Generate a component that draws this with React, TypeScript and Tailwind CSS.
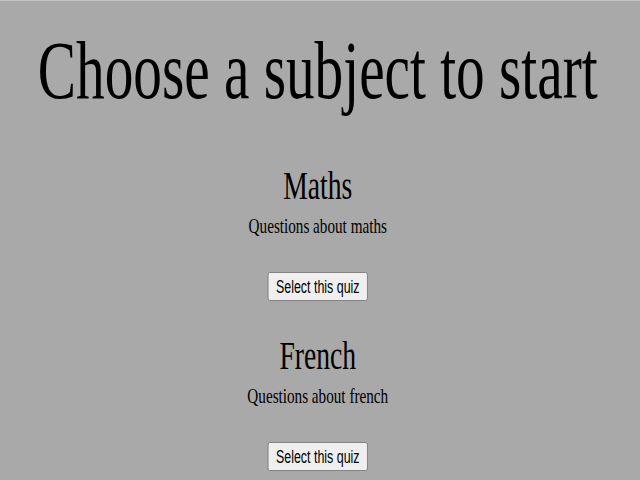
const subjects = [
  { name: 'Maths', description: 'Questions about maths' },
  { name: 'French', description: 'Questions about french' },
];

function QuizCard({ name, description }: { name: string; description: string }) {
  return (
    <section className="flex flex-col items-center">
      <h2 className="text-[40px] leading-none font-normal">{name}</h2>
      <p className="mt-[9px] text-[22px] leading-none">{description}</p>
      <button
        type="button"
        className="mt-[35px] flex h-[29px] items-center rounded-[3px] border border-[#767676] bg-[#efefef] px-[11px] text-[18px] leading-none text-black font-['Liberation_Sans',Arial,sans-serif]"
      >
        Select this quiz
      </button>
    </section>
  );
}

export default function App() {
  return (
    <div className="h-[480px] w-[640px] overflow-hidden border-t border-[#c4c4c4] bg-[#a9a9a9] text-black font-['Liberation_Serif','Times_New_Roman',serif]">
      {/* the capture is squeezed sideways, so the page is drawn wider and scaled down */}
      <div className="w-[921px] origin-top-left scale-x-[0.69]">
        <h1 className="mt-[28px] text-center text-[83px] leading-none font-normal">Choose a subject to start</h1>
        <div className="mt-[54px] flex flex-col gap-[35px]">
          {subjects.map((s) => (
            <QuizCard key={s.name} name={s.name} description={s.description} />
          ))}
        </div>
      </div>
    </div>
  );
}
